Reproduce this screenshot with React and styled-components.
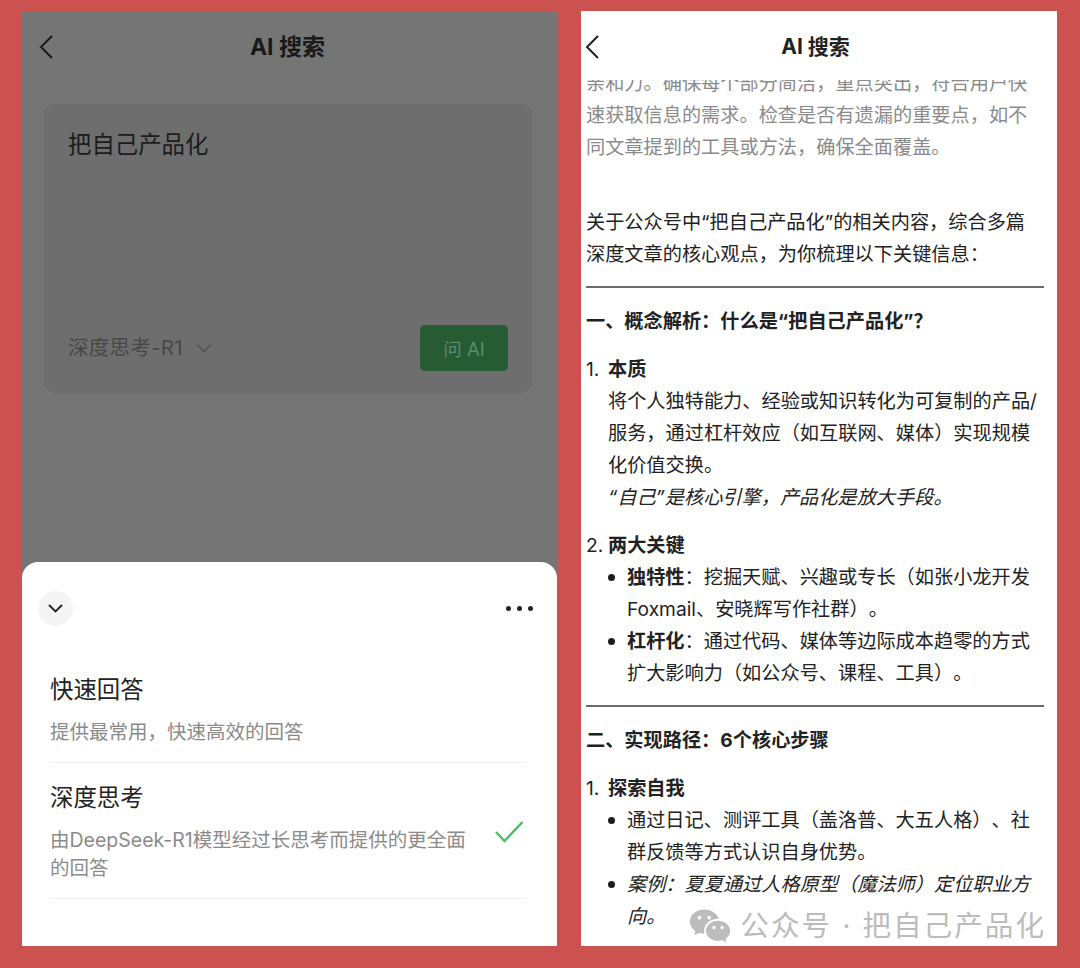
import React from "react";
import styled, { createGlobalStyle } from "styled-components";
import { RiWechatFill } from "react-icons/ri";

const GlobalStyle = createGlobalStyle`
  * { box-sizing: border-box; }
  html, body { margin: 0; padding: 0; }
  body {
    background: #cb524e;
    font-family: "Inter", "Noto Sans CJK SC", sans-serif;
    text-spacing-trim: space-all;
  }
`;

const Screen = styled.div`
  width: 1080px;
  height: 968px;
  padding: 11px 23px 22px 22px;
  display: flex;
  gap: 24px;
  background: #cb524e;
  overflow: hidden;
`;

const Phone = styled.div`
  position: relative;
  width: ${(p) => p.$width}px;
  height: 935px;
  display: flex;
  flex-direction: column;
  overflow: hidden;
  background: ${(p) => p.$bg};
`;

const DimPage = styled.div`
  flex: 1;
  background: #757575;
`;

const Nav = styled.div`
  height: ${(p) => p.$height}px;
  padding: 22px ${(p) => p.$right}px 0 ${(p) => p.$left}px;
  display: grid;
  grid-template-columns: 1fr auto 1fr;
  align-items: start;
  flex-shrink: 0;
  color: ${(p) => p.$color};
`;

const BackIcon = styled.svg`
  width: 16px;
  height: 28px;
  display: block;
`;

const NavTitle = styled.div`
  font-size: ${(p) => p.$size}px;
  line-height: 28px;
  font-weight: 700;
  white-space: nowrap;
`;

const QueryCard = styled.div`
  height: 289px;
  margin: 21px 25px 0 22px;
  padding: 25px 24px 22px 24px;
  display: flex;
  flex-direction: column;
  justify-content: space-between;
  background: #6e6e6e;
  border-radius: 10px;
`;

const QueryText = styled.div`
  font-size: 23.4px;
  line-height: 32px;
  color: #1c1c1c;
`;

const CardFooter = styled.div`
  display: flex;
  align-items: center;
  justify-content: space-between;
`;

const ModelPicker = styled.div`
  display: flex;
  align-items: center;
  gap: 12px;
  font-size: 20.6px;
  line-height: 28px;
  letter-spacing: 0.2px;
  color: #484848;
`;

const AskButton = styled.div`
  width: 88px;
  height: 46px;
  display: flex;
  align-items: center;
  justify-content: center;
  background: #265b33;
  border-radius: 5px;
  font-size: 18.5px;
  color: #5f8a6b;
`;

const Sheet = styled.div`
  height: 384px;
  flex-shrink: 0;
  padding-top: 29px;
  background: #fff;
  border-radius: 16px 16px 0 0;
`;

const SheetTop = styled.div`
  padding: 0 24px 0 16px;
  display: flex;
  align-items: center;
  justify-content: space-between;
`;

const CollapseButton = styled.div`
  width: 35px;
  height: 35px;
  display: flex;
  align-items: center;
  justify-content: center;
  border-radius: 50%;
  background: #f5f5f5;
`;

const Dots = styled.div`
  display: flex;
  gap: 6px;
`;

const Dot = styled.span`
  width: 5px;
  height: 5px;
  border-radius: 50%;
  background: #222;
`;

const OptionList = styled.div`
  margin: 48px 32px 0 28px;
`;

const Option = styled.div`
  padding: ${(p) => (p.$first ? 0 : 19)}px 0 16px;
  border-bottom: 1px solid #f0f0f0;
`;

const OptionTitle = styled.div`
  font-size: 23.4px;
  line-height: 32px;
  color: #222;
`;

const OptionBody = styled.div`
  margin-top: 12px;
  display: flex;
  justify-content: space-between;
`;

const OptionDesc = styled.div`
  width: 430px;
  font-size: 19.5px;
  line-height: 28px;
  color: #8b8b8b;
`;

const CheckIcon = styled.svg`
  width: 30px;
  height: 24px;
  margin: -6px 1px 0 0;
  flex-shrink: 0;
`;

const Article = styled.div`
  flex: 1;
  overflow: hidden;
  padding: 0 18px 0 5px;
  font-size: 19.2px;
  line-height: 32px;
  color: #222;
`;

const Thinking = styled.p`
  margin: -13px 0 43px;
  color: #8a8a8a;
`;

const Paragraph = styled.p`
  margin: 0;
`;

const Rule = styled.hr`
  height: 2px;
  margin: 16px -5px 17px 0;
  border: 0;
  background: #6a6a6a;
`;

const SectionTitle = styled.div`
  font-weight: 700;
`;

const NumberedItem = styled.div`
  margin-top: 16px;
  display: flex;
`;

const ItemNumber = styled.span`
  width: 22px;
  flex-shrink: 0;
`;

const ItemBody = styled.div`
  flex: 1;
  min-width: 0;
`;

const Strong = styled.strong`
  font-weight: 700;
`;

const Italic = styled.div`
  font-style: italic;
`;

const Bullet = styled.div`
  display: flex;
`;

const BulletMark = styled.span`
  width: 19px;
  height: 32px;
  flex-shrink: 0;
  display: flex;
  align-items: center;

  &::before {
    content: "";
    width: 7px;
    height: 7px;
    border-radius: 50%;
    background: #1c1c1c;
  }
`;

const Watermark = styled.div`
  position: absolute;
  right: 11px;
  bottom: -2px;
  display: flex;
  align-items: center;
  gap: 8px;
  font-size: 28.6px;
  line-height: 40px;
  letter-spacing: 2px;
  color: #bcbcbc;
  white-space: nowrap;
`;

const WatermarkLogo = styled(RiWechatFill)`
  width: 44px;
  height: 44px;
  color: #bcbcbc;
`;

const Back = ({ color }) => (
  <BackIcon viewBox="0 0 16 28">
    <path d="M14 3 L3 14 L14 25" fill="none" stroke={color} strokeWidth="2" />
  </BackIcon>
);

const BulletItem = ({ children }) => (
  <Bullet>
    <BulletMark />
    <ItemBody>{children}</ItemBody>
  </Bullet>
);

export default function App() {
  return (
    <>
      <GlobalStyle />
      <Screen lang="zh-CN">
        <Phone $width={535} $bg="#757575">
          <DimPage>
            <Nav $height={72} $left={16} $right={20} $color="#1a1a1a">
              <Back color="#1a1a1a" />
              <NavTitle $size={23}>AI 搜索</NavTitle>
            </Nav>
            <QueryCard>
              <QueryText>把自己产品化</QueryText>
              <CardFooter>
                <ModelPicker>
                  深度思考-R1
                  <svg width="18" height="10" viewBox="0 0 18 10">
                    <path d="M2 1.5 L9 8.5 L16 1.5" fill="none" stroke="#505050" strokeWidth="1.4" />
                  </svg>
                </ModelPicker>
                <AskButton>问 AI</AskButton>
              </CardFooter>
            </QueryCard>
          </DimPage>
          <Sheet>
            <SheetTop>
              <CollapseButton>
                <svg width="17" height="11" viewBox="0 0 17 11">
                  <path d="M2 2 L8.5 8.5 L15 2" fill="none" stroke="#222" strokeWidth="1.8" />
                </svg>
              </CollapseButton>
              <Dots>
                <Dot />
                <Dot />
                <Dot />
              </Dots>
            </SheetTop>
            <OptionList>
              <Option $first>
                <OptionTitle>快速回答</OptionTitle>
                <OptionBody>
                  <OptionDesc>提供最常用，快速高效的回答</OptionDesc>
                </OptionBody>
              </Option>
              <Option>
                <OptionTitle>深度思考</OptionTitle>
                <OptionBody>
                  <OptionDesc>由DeepSeek-R1模型经过长思考而提供的更全面的回答</OptionDesc>
                  <CheckIcon viewBox="0 0 30 24">
                    <path d="M2 12 L10.5 21 L28.5 2" fill="none" stroke="#45c064" strokeWidth="2.4" />
                  </CheckIcon>
                </OptionBody>
              </Option>
            </OptionList>
          </Sheet>
        </Phone>

        <Phone $width={476} $bg="#fff">
          <Nav $height={69} $left={3} $right={10} $color="#222">
            <Back color="#222" />
            <NavTitle $size={21}>AI 搜索</NavTitle>
          </Nav>
          <Article>
            <Thinking>
              亲和力。确保每个部分简洁，重点突出，符合用户快速获取信息的需求。检查是否有遗漏的重要点，如不同文章提到的工具或方法，确保全面覆盖。
            </Thinking>
            <Paragraph>
              关于公众号中“把自己产品化”的相关内容，综合多篇深度文章的核心观点，为你梳理以下关键信息：
            </Paragraph>
            <Rule />
            <SectionTitle>一、概念解析：什么是“把自己产品化”？</SectionTitle>
            <NumberedItem>
              <ItemNumber>1.</ItemNumber>
              <ItemBody>
                <Strong>本质</Strong>
                <div>将个人独特能力、经验或知识转化为可复制的产品/服务，通过杠杆效应（如互联网、媒体）实现规模化价值交换。</div>
                <Italic>“自己”是核心引擎，产品化是放大手段。</Italic>
              </ItemBody>
            </NumberedItem>
            <NumberedItem>
              <ItemNumber>2.</ItemNumber>
              <ItemBody>
                <Strong>两大关键</Strong>
                <BulletItem>
                  <Strong>独特性</Strong>：挖掘天赋、兴趣或专长（如张小龙开发Foxmail、安晓辉写作社群）。
                </BulletItem>
                <BulletItem>
                  <Strong>杠杆化</Strong>：通过代码、媒体等边际成本趋零的方式扩大影响力（如公众号、课程、工具）。
                </BulletItem>
              </ItemBody>
            </NumberedItem>
            <Rule />
            <SectionTitle>二、实现路径：6个核心步骤</SectionTitle>
            <NumberedItem>
              <ItemNumber>1.</ItemNumber>
              <ItemBody>
                <Strong>探索自我</Strong>
                <BulletItem>通过日记、测评工具（盖洛普、大五人格）、社群反馈等方式认识自身优势。</BulletItem>
                <BulletItem>
                  <Italic>案例：夏夏通过人格原型（魔法师）定位职业方向。</Italic>
                </BulletItem>
              </ItemBody>
            </NumberedItem>
          </Article>
          <Watermark>
            <WatermarkLogo />
            <span>公众号 · 把自己产品化</span>
          </Watermark>
        </Phone>
      </Screen>
    </>
  );
}
